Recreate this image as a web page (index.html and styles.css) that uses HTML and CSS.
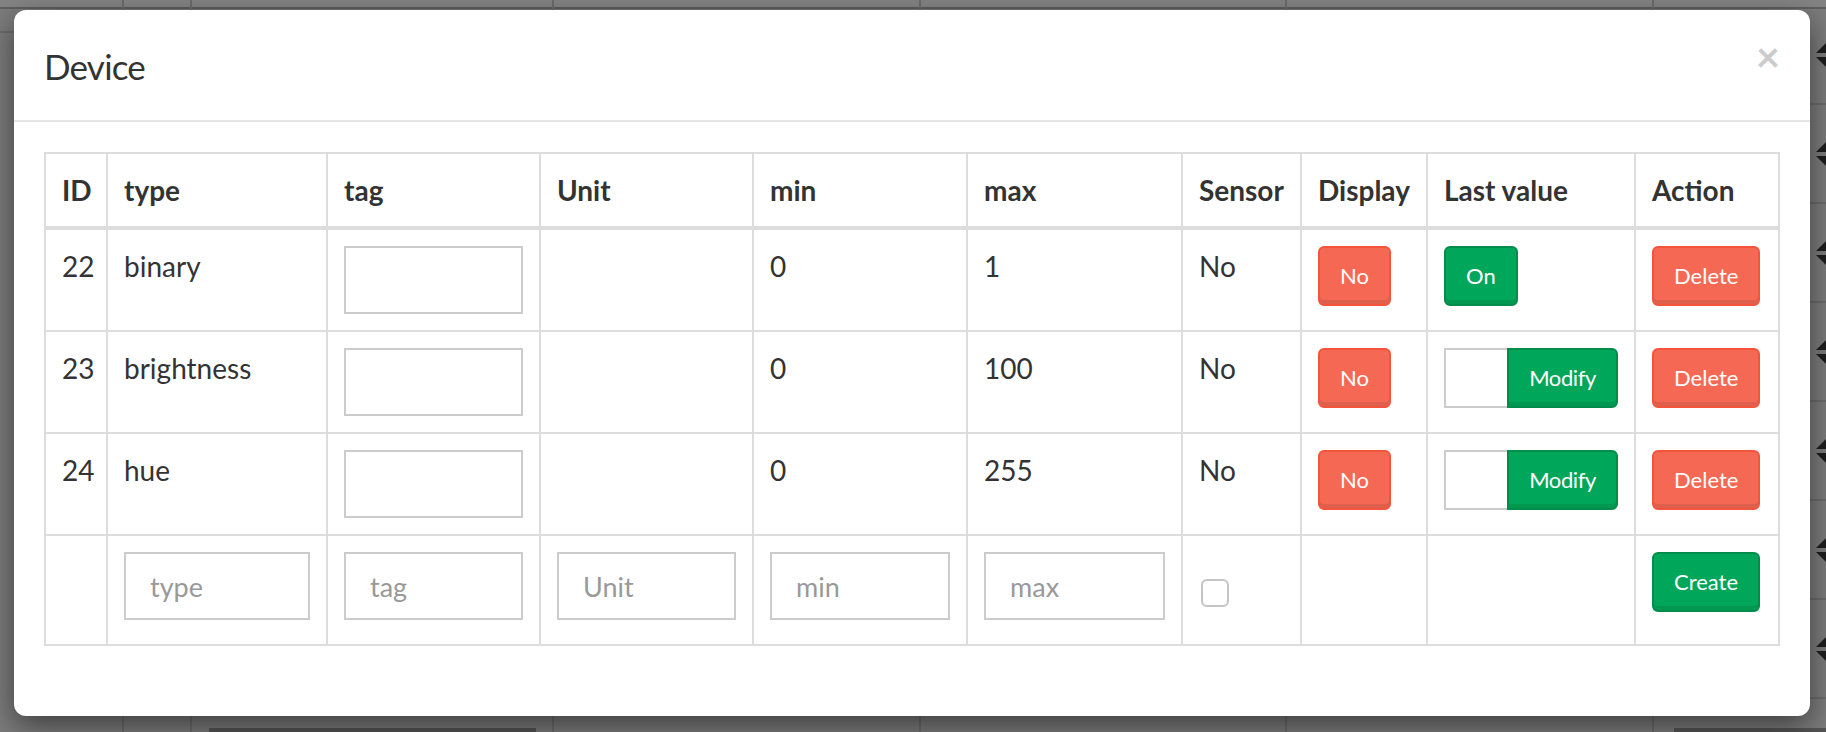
FILE: index.html
```html
<!DOCTYPE html>
<html lang="en">
<head>
<meta charset="utf-8">
<title>Device</title>
<link rel="stylesheet" href="styles.css">
</head>
<body>
<div class="backdrop">
  <div class="bgcol c1"><div class="bgline"></div></div>
  <div class="bgcol c2"></div>
  <div class="bgcol c3"><div class="bgbar"></div></div>
  <div class="bgcol c4"></div>
  <div class="bgcol c5"></div>
  <div class="bgcol c6"></div>
  <div class="bgcol c7">
    <div class="sorts">
      <div class="sort-row"><svg class="sort" viewBox="0 0 20 24"><polygon points="0,10 10,0 20,10"/><polygon points="0,14 10,24 20,14"/></svg></div>
      <div class="sort-row"><svg class="sort" viewBox="0 0 20 24"><polygon points="0,10 10,0 20,10"/><polygon points="0,14 10,24 20,14"/></svg></div>
      <div class="sort-row"><svg class="sort" viewBox="0 0 20 24"><polygon points="0,10 10,0 20,10"/><polygon points="0,14 10,24 20,14"/></svg></div>
      <div class="sort-row"><svg class="sort" viewBox="0 0 20 24"><polygon points="0,10 10,0 20,10"/><polygon points="0,14 10,24 20,14"/></svg></div>
      <div class="sort-row"><svg class="sort" viewBox="0 0 20 24"><polygon points="0,10 10,0 20,10"/><polygon points="0,14 10,24 20,14"/></svg></div>
      <div class="sort-row"><svg class="sort" viewBox="0 0 20 24"><polygon points="0,10 10,0 20,10"/><polygon points="0,14 10,24 20,14"/></svg></div>
      <div class="sort-row"><svg class="sort" viewBox="0 0 20 24"><polygon points="0,10 10,0 20,10"/><polygon points="0,14 10,24 20,14"/></svg></div>
    </div>
    <div class="bgbar2"></div>
  </div>
</div>

<div class="modal">
  <div class="modal-header">
    <h4 class="modal-title">Device</h4>
    <button class="close" type="button">×</button>
  </div>
  <div class="modal-body">
    <table class="table">
      <colgroup>
        <col class="w-id"><col class="w-type"><col class="w-tag"><col class="w-unit"><col class="w-min"><col class="w-max"><col class="w-sensor"><col class="w-display"><col class="w-last"><col>
      </colgroup>
      <thead>
        <tr><th>ID</th><th>type</th><th>tag</th><th>Unit</th><th>min</th><th>max</th><th>Sensor</th><th>Display</th><th>Last value</th><th>Action</th></tr>
      </thead>
      <tbody>
        <tr>
          <td>22</td><td>binary</td><td><input class="form-control" type="text"></td><td></td><td>0</td><td>1</td><td>No</td>
          <td><button class="btn btn-danger">No</button></td>
          <td><button class="btn btn-success">On</button></td>
          <td><button class="btn btn-danger">Delete</button></td>
        </tr>
        <tr>
          <td>23</td><td>brightness</td><td><input class="form-control" type="text"></td><td></td><td>0</td><td>100</td><td>No</td>
          <td><button class="btn btn-danger">No</button></td>
          <td><div class="input-group"><input class="input-sm" type="text"><button class="btn btn-success btn-append">Modify</button></div></td>
          <td><button class="btn btn-danger">Delete</button></td>
        </tr>
        <tr>
          <td>24</td><td>hue</td><td><input class="form-control" type="text"></td><td></td><td>0</td><td>255</td><td>No</td>
          <td><button class="btn btn-danger">No</button></td>
          <td><div class="input-group"><input class="input-sm" type="text"><button class="btn btn-success btn-append">Modify</button></div></td>
          <td><button class="btn btn-danger">Delete</button></td>
        </tr>
        <tr>
          <td></td>
          <td><input class="form-control" type="text" placeholder="type"></td>
          <td><input class="form-control" type="text" placeholder="tag"></td>
          <td><input class="form-control" type="text" placeholder="Unit"></td>
          <td><input class="form-control" type="text" placeholder="min"></td>
          <td><input class="form-control" type="text" placeholder="max"></td>
          <td><input class="check" type="checkbox"></td>
          <td></td>
          <td></td>
          <td><button class="btn btn-success">Create</button></td>
        </tr>
      </tbody>
    </table>
  </div>
</div>
</body>
</html>
```

FILE: styles.css
```css
html, body {
  margin: 0;
  padding: 0;
}
body {
  width: 1826px;
  height: 732px;
  overflow: hidden;
  position: relative;
  font-family: "Source Sans Pro", Lato, "Liberation Sans", sans-serif;
  font-size: 28px;
  line-height: 40px;
  color: #333;
  background: #7c7c7c;
}

/* page behind the backdrop */
.backdrop {
  display: flex;
  height: 732px;
  background: linear-gradient(to bottom, #848484 0, #848484 7px, #5f5f5f 7px, #5f5f5f 9px, #7c7c7c 9px);
}
.bgcol {
  display: flex;
  flex-direction: column;
  box-sizing: border-box;
}
.bgcol + .bgcol { border-left: 2px solid #6c6c6c; }
.c1 { width: 122px; }
.c2 { width: 68px; }
.c3 { width: 363px; }
.c4 { width: 367px; }
.c5 { width: 367px; }
.c6 { width: 367px; }
.c7 { flex: 1; align-items: flex-end; }
.bgline {
  margin-top: 31px;
  height: 2px;
  background: #6c6c6c;
}
.bgbar {
  margin: auto 16px 0 17px;
  height: 4px;
  background: #555;
}
.bgbar2 {
  margin-top: auto;
  width: 152px;
  height: 4px;
  background: #555;
}
.sorts {
  padding-top: 6px;
  display: flex;
  flex-direction: column;
  width: 172px;
}
.sort-row {
  height: 97px;
  display: flex;
  align-items: center;
  justify-content: flex-end;
  border-bottom: 2px solid #6c6c6c;
}
.sort {
  width: 20px;
  height: 24px;
  margin-right: -10px;
  fill: #1e1e1e;
}

/* modal */
.modal {
  position: absolute;
  left: 14px;
  top: 10px;
  width: 1796px;
  background: #fff;
  border-radius: 12px;
  box-shadow: 0 10px 30px rgba(0, 0, 0, 0.5);
}
.modal-header {
  display: flex;
  justify-content: space-between;
  align-items: flex-start;
  padding: 32px 30px 30px;
  border-bottom: 2px solid #e5e5e5;
}
.modal-title {
  margin: 0;
  font-size: 35px;
  line-height: 48px;
  letter-spacing: -0.8px;
  font-weight: 400;
  color: #333;
}
.close {
  margin-top: -7px;
  padding: 0;
  background: none;
  border: 0;
  font-family: inherit;
  font-size: 42px;
  line-height: 42px;
  font-weight: 700;
  color: #000;
  opacity: 0.2;
  text-shadow: 0 2px 0 #fff;
}
.modal-body {
  padding: 30px 30px 70px;
}

/* table */
.table {
  width: 100%;
  table-layout: fixed;
  border-collapse: collapse;
  border: 2px solid #ddd;
}
.w-id { width: 62px; }
.w-type { width: 220px; }
.w-tag { width: 213px; }
.w-unit { width: 213px; }
.w-min { width: 214px; }
.w-max { width: 215px; }
.w-sensor { width: 119px; }
.w-display { width: 126px; }
.w-last { width: 208px; }
.table th,
.table td {
  padding: 16px;
  border: 2px solid #ddd;
  vertical-align: top;
  text-align: left;
  line-height: 40px;
}
.table th {
  font-weight: 700;
  border-bottom-width: 4px;
}

.form-control {
  display: block;
  box-sizing: border-box;
  width: 100%;
  height: 68px;
  margin: 0;
  padding: 12px 24px;
  font-family: inherit;
  font-size: 27px;
  line-height: 40px;
  color: #555;
  background: #fff;
  border: 2px solid #ccc;
  border-radius: 0;
  outline: none;
}
.form-control::placeholder { color: #999; }

.input-group {
  display: flex;
}
.input-sm {
  flex: 1;
  min-width: 0;
  box-sizing: border-box;
  height: 60px;
  margin: 0;
  padding: 10px 20px;
  font-family: inherit;
  font-size: 24px;
  border: 2px solid #ccc;
  border-right: 0;
  border-radius: 0;
  outline: none;
}

.btn {
  display: inline-block;
  box-sizing: border-box;
  height: 60px;
  margin: 0;
  padding: 10px 20px;
  font-family: inherit;
  font-size: 22px;
  line-height: 36px;
  font-weight: 400;
  color: #fff;
  border: 2px solid transparent;
  border-radius: 6px;
  box-shadow: inset 0 -4px 0 rgba(0, 0, 0, 0.09);
  vertical-align: top;
  white-space: nowrap;
}
.btn-danger {
  background: #f56954;
  border-color: #f4543c;
}
.btn-success {
  background: #00a65a;
  border-color: #008d4c;
}
.btn-append {
  flex: none;
  border-radius: 0 6px 6px 0;
  letter-spacing: -0.4px;
}

.check {
  appearance: none;
  -webkit-appearance: none;
  display: block;
  box-sizing: border-box;
  width: 28px;
  height: 28px;
  margin: 27px 0 21px 2px;
  border: 2px solid #c4c4c4;
  border-radius: 6px;
  background: #fff;
}
```
